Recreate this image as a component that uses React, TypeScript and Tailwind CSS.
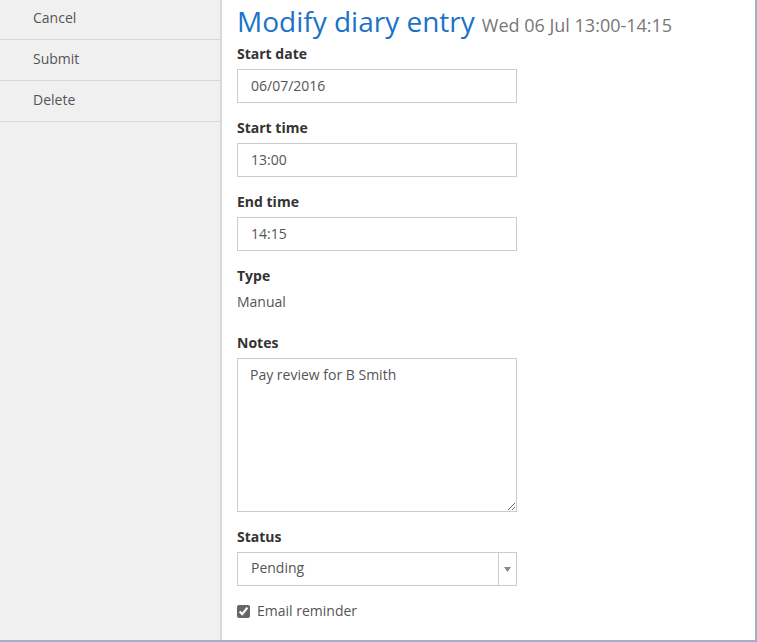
import { useState } from 'react'

const font = { fontFamily: '"Open Sans", "Liberation Sans", sans-serif' }

function Field({ label, value }: { label: string; value: string }) {
  return (
    <div className="mb-[15px]">
      <label className="block text-[14px] leading-[20px] font-bold text-[#333] mb-[5px]">{label}</label>
      <input
        defaultValue={value}
        className="w-[280px] h-[34px] border border-[#ccc] bg-white px-[13px] pb-[2px] text-[14px] text-[#555] outline-none"
      />
    </div>
  )
}

export default function App() {
  const [remind, setRemind] = useState(true)

  return (
    <div style={font} className="w-[757px] h-[642px] flex bg-white border-r-2 border-b-2 border-[#9fb0cc] overflow-hidden">
      <div className="w-[222px] shrink-0 bg-[#f0f0f0] border-r-2 border-[#d8d8d8]">
        <div className="-mt-px">
          {['Cancel', 'Submit', 'Delete'].map(item => (
            <div key={item} className="h-[41px] border-b border-[#d8d8d8] pl-[33px] pt-[9px] text-[14px] leading-[20px] text-[#555]">
              {item}
            </div>
          ))}
        </div>
      </div>

      <div className="flex-1 pl-[15px]">
        <div className="h-[44px] pt-[1px] leading-[40px] whitespace-nowrap">
          <span className="text-[28px] text-[#1a73c8] mr-[7px]">Modify diary entry</span>
          <span className="text-[18px] text-[#777]">Wed 06 Jul 13:00-14:15</span>
        </div>

        <Field label="Start date" value="06/07/2016" />
        <Field label="Start time" value="13:00" />
        <Field label="End time" value="14:15" />

        <div className="mb-[21px]">
          <div className="text-[14px] leading-[20px] font-bold text-[#333] mb-[6px]">Type</div>
          <div className="text-[14px] leading-[20px] text-[#555]">Manual</div>
        </div>

        <div className="mb-[15px]">
          <label className="block text-[14px] leading-[20px] font-bold text-[#333] mb-[5px]">Notes</label>
          <textarea
            defaultValue="Pay review for B Smith"
            className="block w-[280px] h-[154px] border border-[#ccc] bg-white px-[12px] py-[6px] text-[14px] leading-[20px] text-[#555] outline-none"
          />
        </div>

        <div className="mb-[15px]">
          <label className="block text-[14px] leading-[20px] font-bold text-[#333] mb-[5px]">Status</label>
          <div className="w-[280px] h-[34px] border border-[#ccc] bg-white flex text-[14px] leading-[20px] text-[#555]">
            <div className="flex-1 flex items-center pl-[13px] pb-[2px]">Pending</div>
            <div className="w-[18px] border-l border-[#ccc] flex items-center justify-center">
              <svg width="7" height="5" viewBox="0 0 7 5">
                <path d="M0 0h7L3.5 5z" fill="#888" />
              </svg>
            </div>
          </div>
        </div>

        <label className="flex items-center gap-[7px] text-[14px] leading-[20px] text-[#555]">
          <input
            type="checkbox"
            checked={remind}
            onChange={e => setRemind(e.target.checked)}
            className="w-[13px] h-[13px] m-0 accent-[#666]"
          />
          Email reminder
        </label>
      </div>
    </div>
  )
}
